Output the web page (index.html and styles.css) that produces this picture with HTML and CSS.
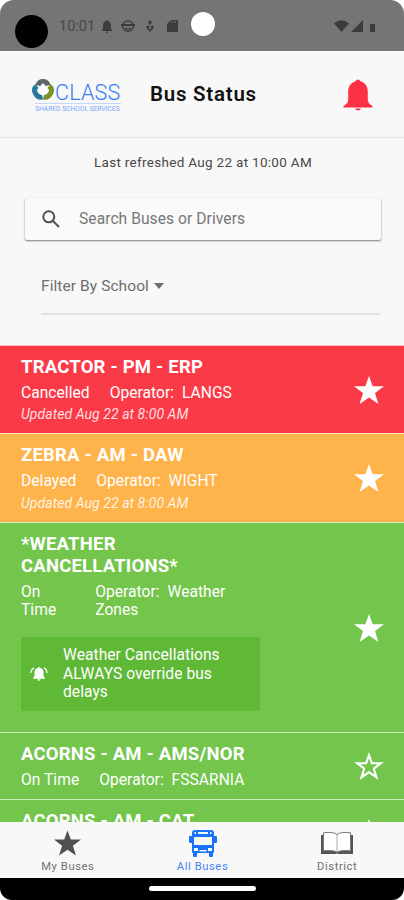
FILE: index.html
```
<!DOCTYPE html>
<html lang="en">
<head>
<meta charset="UTF-8">
<meta name="viewport" content="width=device-width, initial-scale=1.0">
<title>Bus Status</title>
<link rel="stylesheet" href="styles.css">
</head>
<body>
<!-- Shared icons -->
<svg class="sprite" width="0" height="0">
  <symbol id="star" viewBox="0 0 30 28"><path d="M15 0l3.700 10.200H30l-9 6.900L24.400 28 15 21.400 5.600 28 9 17.100 0 10.200h11.300z"/></symbol>
  <symbol id="star-outline" viewBox="0 0 30 28"><path fill-rule="evenodd" d="M15 0l3.700 10.200H30l-9 6.900L24.400 28 15 21.400 5.600 28 9 17.100 0 10.200h11.300zM15 6.200l-2.100 6.100H6.400l5 3.900-2 6.500 5.600-4 5.600 4-2-6.500 5-3.900h-6.500z"/></symbol>
</svg>

<div class="phone">
  <!-- Status Bar -->
  <div class="status-bar">
    <span class="camera"></span>
    <span class="clock">10:01</span>
    <svg class="status-icon bell-small" viewBox="0 0 10 13"><path d="M4 1a1 1 0 0 1 2 0c2 .6 3 2 3 4.500V9l1 1v1H0v-1l1-1V5.500C1 3 2 1.600 4 1zM4 11.500h2c0 2-2 2-2 0z"/></svg>
    <svg class="status-icon face" viewBox="0 0 14 14"><circle cx="7" cy="7" r="5.300" fill="none" stroke="#3c3c3c" stroke-width="1.500"/><path d="M0 5h14v2H0zM4 9h6v1.500H4z"/></svg>
    <svg class="status-icon pin" viewBox="0 0 8 12"><path d="M4 0l2 2.500L4 5 2 2.500zM1 5.500l3 1 3-1 1 2L4 12 0 7.500z"/><circle cx="4" cy="8" r="1.200" fill="#757575"/></svg>
    <svg class="status-icon sd-card" viewBox="0 0 11 13"><path d="M4 1h7v12H0V5z"/><path d="M4.500 2v2M6.500 2v2M8.500 2v2" stroke="#606060"/></svg>
    <span class="dot"></span>
    <svg class="status-icon wifi" viewBox="0 0 15 12"><path d="M0 3.500Q7.500-3 15 3.500L7.500 12z"/></svg>
    <svg class="status-icon signal" viewBox="0 0 12 12"><path d="M12 0v12H0z"/></svg>
    <svg class="status-icon battery" viewBox="0 0 5 8"><path d="M0 0h5v8H0z"/></svg>
  </div>

  <!-- Header -->
  <div class="header">
    <div class="logo">
      <div class="logo-top">
        <svg class="logo-mark" viewBox="0 0 22 21" fill="none" stroke-width="5">
          <path stroke="#5f6668" d="M6 6.500Q7 2.500 11 2.500t5 4"/>
          <path stroke="#277b9d" d="M5 7Q1 10 3.500 14.500T10.500 18"/>
          <path stroke="#7b922b" d="M17 7Q21 10 18.500 14.500T11.500 18"/>
          <path fill="#fff" d="M11 4l4.500 7q1 4.500-4.500 5-5.500-.5-4.500-5z"/>
        </svg>
        <span class="logo-name">CLASS</span>
      </div>
      <div class="logo-sub">SHARED SCHOOL SERVICES</div>
    </div>
    <h1 class="page-title">Bus Status</h1>
    <svg class="header-bell" viewBox="0 0 30 32"><path d="M12.500 2.200a2.700 2.700 0 0 1 5 0C23 4 24.800 8 24.800 13v7.500c0 3 1.700 5 4.700 6.500v1.500H.500V27c3-1.500 4.700-3.500 4.700-6.500V13C5.200 8 7 4 12.500 2.200zM12 29.500h6c-1 2.500-5 2.500-6 0z"/></svg>
  </div>

  <!-- Search and Filter -->
  <div class="tools">
    <div class="refreshed">Last refreshed Aug 22 at 10:00 AM</div>
    <div class="search-bar">
      <svg class="search-icon" viewBox="0 0 18 18"><circle cx="6.800" cy="6.800" r="5.500"/><path d="M11 11l6 6"/></svg>
      <span class="search-text">Search Buses or Drivers</span>
    </div>
    <div class="filter">
      <span class="filter-text">Filter By School</span>
      <span class="caret"></span>
    </div>
  </div>

  <!-- Bus List -->
  <div class="bus-list">
    <div class="bus cancelled">
      <div class="bus-info">
        <h2 class="bus-name">TRACTOR - PM - ERP</h2>
        <div class="bus-meta"><span>Cancelled</span><span>Operator:&nbsp; LANGS</span></div>
        <div class="bus-updated">Updated Aug 22 at 8:00 AM</div>
      </div>
      <svg class="fav"><use href="#star"/></svg>
    </div>
    <div class="bus delayed">
      <div class="bus-info">
        <h2 class="bus-name">ZEBRA - AM - DAW</h2>
        <div class="bus-meta"><span>Delayed</span><span>Operator:&nbsp; WIGHT</span></div>
        <div class="bus-updated">Updated Aug 22 at 8:00 AM</div>
      </div>
      <svg class="fav"><use href="#star"/></svg>
    </div>
    <div class="bus on-time weather">
      <div class="bus-info">
        <h2 class="bus-name">*WEATHER<br>CANCELLATIONS*</h2>
        <div class="bus-meta wrapped"><span>On<br>Time</span><span>Operator:&nbsp; Weather<br>Zones</span></div>
        <div class="notice">
          <svg class="notice-icon" viewBox="0 0 18 14"><path d="M8 1a1 1 0 0 1 2 0c2.500.5 3.500 2.300 3.500 4.500V9l1.500 2v.700H3V11l1.500-2V5.500C4.500 3.300 5.500 1.500 8 1zM7.500 12.300h3c-.3 2-2.700 2-3 0z"/><path class="wave" d="M4 .800Q1 2.500.800 6M14 .800q3 1.700 3.200 5.200"/></svg>
          <span>Weather Cancellations<br>ALWAYS override bus<br>delays</span>
        </div>
      </div>
      <svg class="fav"><use href="#star"/></svg>
    </div>
    <div class="bus on-time short">
      <div class="bus-info">
        <h2 class="bus-name">ACORNS - AM - AMS/NOR</h2>
        <div class="bus-meta"><span>On Time</span><span>Operator:&nbsp; FSSARNIA</span></div>
      </div>
      <svg class="fav"><use href="#star-outline"/></svg>
    </div>
    <div class="bus on-time short">
      <div class="bus-info">
        <h2 class="bus-name">ACORNS - AM - CAT</h2>
      </div>
      <svg class="fav"><use href="#star-outline"/></svg>
    </div>
  </div>

  <!-- Bottom Tabs -->
  <div class="tab-bar">
    <a class="tab">
      <svg class="tab-icon star-icon"><use href="#star"/></svg>
      <span>My Buses</span>
    </a>
    <a class="tab active">
      <svg class="tab-icon bus-icon" viewBox="0 0 28 27"><path fill-rule="evenodd" d="M6 0h16q3 0 3 3v3h2q1 0 1 1v5q0 1-1 1h-2v9q0 1-1 1v3q0 1-1 1h-2q-1 0-1-1v-3H8v3q0 1-1 1H5q-1 0-1-1v-3q-1 0-1-1v-9H1q-1 0-1-1V7q0-1 1-1h2V3q0-3 3-3zM9 2v2h10V2zM5 7v8h18V7zM5 18v3h4v-3zM19 18v3h4v-3zM10.500 20v1.500h7V20zM5.500 2v2H7V2zM21 2v2h1.500V2z"/></svg>
      <span>All Buses</span>
    </a>
    <a class="tab">
      <svg class="tab-icon book-icon" viewBox="0 0 32 22"><path fill="#555" d="M0 3h3v15h10l3 1.500 3-1.500h10V3h3v19H18q-2-1-4 0H0z"/><path fill="#fff" stroke="#777" d="M2.500.8Q12-.5 16 2.500 20-.5 29.500.8v18Q20 18 16 20q-4-2-13.500-1.200z"/><path stroke="#aaa" d="M16 2.500V20"/></svg>
      <span>District</span>
    </a>
  </div>
  <div class="home-bar"><span class="home-pill"></span></div>
</div>
</body>
</html>
```
FILE: styles.css
```
/* General Styles */
body {
  margin: 0;
  background-color: #fff;
  font-family: Roboto, sans-serif;
  color: #333;
}
.sprite {
  display: block;
}
.phone {
  display: flex;
  flex-direction: column;
  width: 404px;
  height: 900px;
  overflow: hidden;
  background-color: #f8f8f8;
  border-radius: 14px 14px 12px 12px;
}
/* Status Bar Styles */
.status-bar {
  display: flex;
  flex: none;
  align-items: flex-start;
  box-sizing: border-box;
  height: 51px;
  background-color: #757575;
}
.status-icon {
  fill: #3c3c3c;
  margin-top: 20px;
}
.camera {
  width: 33px;
  height: 33px;
  margin: 15px 0 0 15px;
  border-radius: 50%;
  background-color: #000;
}
.clock {
  width: 36px;
  margin: 18px 0 0 11px;
  font-size: 14.500px;
  line-height: 17px;
  color: #484848;
}
.bell-small {
  width: 10px;
  height: 13px;
  margin-left: 7px;
}
.face {
  width: 14px;
  height: 14px;
  margin: 19px 0 0 9px;
}
.pin {
  width: 8px;
  height: 12px;
  margin-left: 11px;
}
.sd-card {
  width: 11px;
  height: 13px;
  margin: 19px 0 0 13px;
}
.dot {
  width: 24px;
  height: 24px;
  margin: 12px 0 0 13px;
  border-radius: 50%;
  background-color: #fff;
}
.wifi {
  width: 15px;
  height: 12px;
  margin-left: 119px;
}
.signal {
  width: 12px;
  height: 12px;
  margin-left: 2px;
}
.battery {
  width: 5px;
  height: 8px;
  margin: 24px 0 0 7px;
}
/* Header Styles */
.header {
  display: flex;
  flex: none;
  align-items: center;
  box-sizing: border-box;
  height: 87px;
  padding: 0 31px 0 32px;
  border-bottom: 1px solid #e4e4e4;
}
.logo {
  width: 90px;
  margin-top: 3px;
}
.logo-top {
  display: flex;
  height: 24px;
  align-items: flex-start;
}
.logo-mark {
  flex: none;
  width: 22px;
  height: 21px;
}
.logo-name {
  margin: 1px 0 0 1px;
  font-size: 21.500px;
  line-height: 25px;
  letter-spacing: 0.200px;
  font-weight: 300;
  color: #377df5;
}
.logo-sub {
  margin-left: 3px;
  padding-top: 1px;
  width: 86px;
  border-top: 1px solid #c3d7fc;
  font-size: 6.700px;
  line-height: 8px;
  white-space: nowrap;
  color: #7aa5f8;
}
.page-title {
  flex: 1;
  margin: 0 0 0 28px;
  font-size: 20.500px;
  line-height: 26px;
  font-weight: 600;
  letter-spacing: 0.750px;
  color: #111;
}
.header-bell {
  width: 30px;
  height: 32px;
  margin-top: 1px;
  fill: #fc3143;
}
/* Search and Filter Styles */
.tools {
  flex: none;
  box-sizing: border-box;
  height: 207px;
  padding: 16px 23px 0 25px;
}
.refreshed {
  font-size: 13.500px;
  line-height: 16px;
  letter-spacing: 0.300px;
  text-align: center;
  color: #484848;
}
.search-bar {
  display: flex;
  align-items: center;
  height: 42px;
  margin-top: 28px;
  padding-left: 17px;
  border-radius: 2px;
  background-color: #fafafa;
  box-shadow: 0 1px 2px rgba(0, 0, 0, 0.500);
}
.search-icon {
  width: 18px;
  height: 18px;
  fill: none;
  stroke: #505050;
  stroke-width: 2;
}
.search-text {
  margin: -1px 0 0 19px;
  font-size: 15.600px;
  letter-spacing: 0.060px;
  color: #777;
}
.filter {
  display: flex;
  align-items: center;
  box-sizing: border-box;
  height: 57px;
  margin: 18px 1px 0 16px;
  border-bottom: 2px solid #e2e2e2;
}
.filter-text {
  font-size: 15.500px;
  letter-spacing: 0.080px;
  color: #6e6e6e;
}
.caret {
  margin-left: 5px;
  border: 5px solid transparent;
  border-top: 6px solid #6e6e6e;
  border-bottom: 0;
}
/* Bus List Styles */
.bus-list {
  flex: 1;
  min-height: 0;
  overflow: hidden;
  color: #fff;
}
.bus {
  display: flex;
  justify-content: space-between;
  align-items: center;
  box-sizing: border-box;
  height: 88px;
  padding: 0 20px 0 21px;
  border-top: 1px solid rgba(255, 255, 255, 0.650);
}
.bus-info {
  align-self: flex-start;
  padding-top: 10px;
}
.cancelled {
  background-color: #fb3a48;
}
.cancelled .bus-info {
  padding-top: 9.500px;
}
.delayed {
  height: 89px;
  background-color: #ffb34b;
}
.on-time {
  background-color: #73c54c;
}
.weather {
  height: 210px;
}
.short {
  height: 67px;
}
.bus-name {
  margin: 0 0 6px;
  font-size: 18.500px;
  line-height: 22px;
  letter-spacing: 0.200px;
  font-weight: 700;
}
.bus-meta {
  display: flex;
  gap: 20px;
  font-size: 15.600px;
  line-height: 18.400px;
  letter-spacing: 0.040px;
}
.wrapped {
  gap: 39px;
}
.bus-updated {
  margin-top: 4.500px;
  font-size: 14px;
  line-height: 17px;
  letter-spacing: 0.060px;
  font-style: italic;
  color: rgba(255, 255, 255, 0.850);
}
.fav {
  flex: none;
  width: 30px;
  height: 28px;
  fill: #fff;
}
.notice {
  display: flex;
  align-items: center;
  box-sizing: border-box;
  width: 239px;
  height: 74px;
  margin-top: 17px;
  padding-left: 9px;
  background-color: #60b837;
  font-size: 15.600px;
  line-height: 18.400px;
  letter-spacing: 0.050px;
}
.notice-icon {
  width: 18px;
  height: 14px;
  margin-right: 15px;
  fill: #fff;
}
.wave {
  fill: none;
  stroke: #fff;
  stroke-width: 1.200;
}
/* Bottom Tab Styles */
.tab-bar {
  display: flex;
  flex: none;
  height: 56px;
  background-color: #f8f8f8;
}
.tab {
  display: flex;
  flex: 1;
  flex-direction: column;
  align-items: center;
  justify-content: space-between;
  box-sizing: border-box;
  padding: 8px 0 4px 1px;
  font-size: 11.200px;
  line-height: 14px;
  letter-spacing: 0.600px;
  color: #707070;
}
.active {
  color: #4582f5;
}
.star-icon {
  width: 27px;
  height: 26px;
  fill: #505050;
}
.bus-icon {
  width: 28px;
  height: 27px;
  fill: #1a74fb;
}
.book-icon {
  width: 32px;
  height: 22px;
  margin-top: 2px;
}
.home-bar {
  display: flex;
  flex: none;
  justify-content: center;
  height: 22px;
  background-color: #000;
}
.home-pill {
  width: 107px;
  height: 5px;
  margin-top: 8px;
  border-radius: 3px;
  background-color: #fff;
}
```
